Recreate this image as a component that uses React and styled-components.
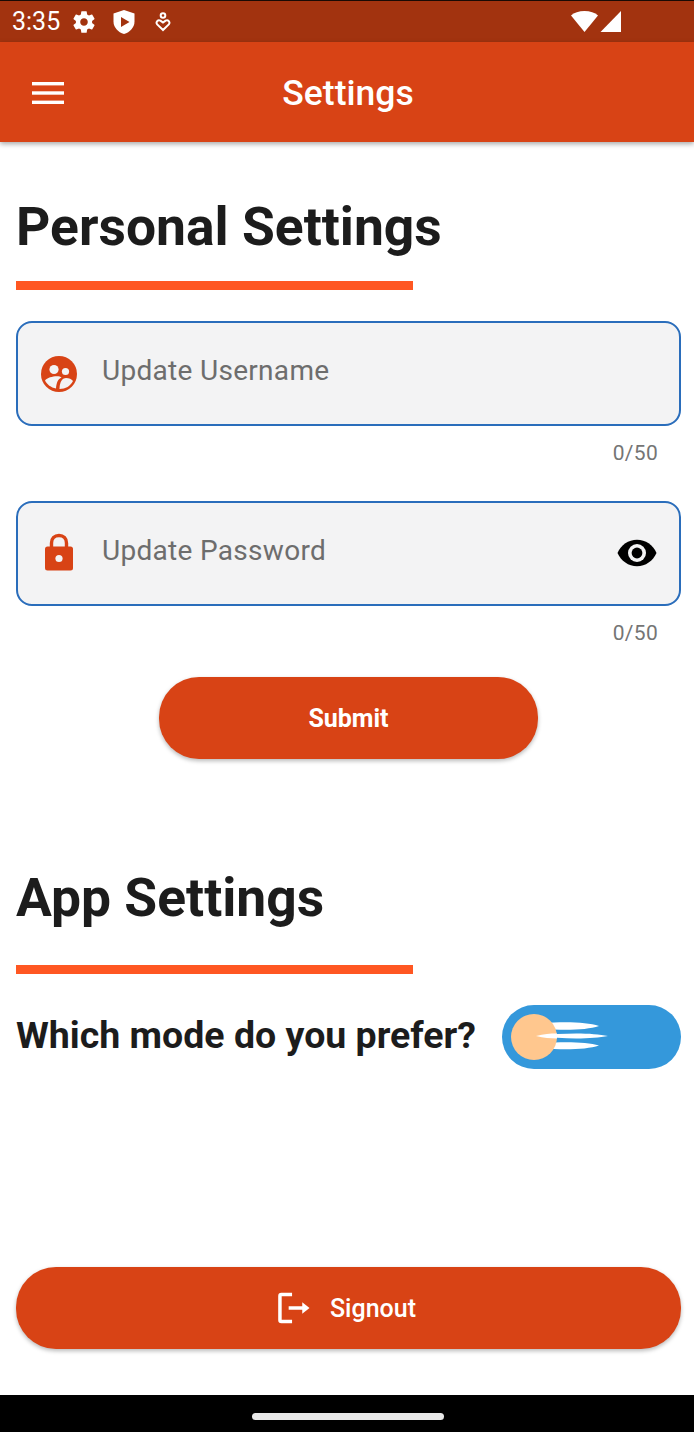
import React from "react";
import styled, { createGlobalStyle } from "styled-components";

const GlobalStyle = createGlobalStyle`
  html, body {
    margin: 0;
    padding: 0;
    background: #fff;
    font-family: Roboto, "Liberation Sans", sans-serif;
  }
`;

const Page = styled.div`
  width: 694px;
  height: 1432px;
  display: flex;
  flex-direction: column;
  overflow: hidden;
  background: #fff;
`;

const StatusBar = styled.div`
  border-top: 1px solid #1a0a04;
  background: #a2330f;
  display: flex;
  align-items: center;
  justify-content: space-between;
  padding: 1px 71px 0 12px;
  height: 40px;
  color: #fff;
  flex-shrink: 0;
`;

const StatusGroup = styled.div`
  display: flex;
  align-items: center;
`;

const Clock = styled.span`
  font-size: 25px;
  line-height: 40px;
  margin-right: 11px;
`;

const AppBar = styled.header`
  height: 100px;
  flex-shrink: 0;
  background: #d84315;
  box-shadow: 0 2px 5px rgba(0, 0, 0, 0.35);
  display: flex;
  align-items: center;
  justify-content: center;
  position: relative;
`;

const MenuIcon = styled.svg`
  position: absolute;
  left: 32px;
  top: 40px;
`;

const AppTitle = styled.h1`
  margin: 2px 0 0 2px;
  color: #fff;
  font-size: 35.5px;
  font-weight: 500;
`;

const Content = styled.main`
  flex: 1;
  display: flex;
  flex-direction: column;
  padding: 0 13px 0 16px;
`;

const SectionTitle = styled.h2`
  margin: ${(p) => p.$top}px 0 0;
  font-size: 53.4px;
  line-height: 61px;
  font-weight: 700;
  color: #1c1c1c;
`;

const Divider = styled.div`
  width: 397px;
  height: 9px;
  margin-top: ${(p) => p.$top}px;
  background: #ff5722;
`;

const Field = styled.div`
  height: 101px;
  margin-top: ${(p) => p.$top}px;
  border: 2px solid #2a6dbb;
  border-radius: 16px;
  background: #f3f3f4;
  display: flex;
  align-items: center;
  padding: 0 22px 0 22px;
`;

const FieldIcon = styled.div`
  width: 38px;
  height: 38px;
  flex-shrink: 0;
  display: flex;
  align-items: center;
  justify-content: center;
  margin-top: ${(p) => p.$lift || 0}px;
`;

const Placeholder = styled.span`
  flex: 1;
  margin: -6px 0 0 24px;
  color: #6d6d6d;
  font-size: 28px;
  letter-spacing: 0.3px;
`;

const Counter = styled.div`
  margin-top: 15px;
  padding-right: 23px;
  text-align: right;
  color: #757575;
  font-size: 21px;
  line-height: 25px;
  letter-spacing: 0.3px;
`;

const PrimaryButton = styled.button`
  display: flex;
  align-items: center;
  justify-content: center;
  gap: 20px;
  border: 0;
  padding: 0 ${(p) => (p.$wide ? 3 : 0)}px 0 0;
  background: #d84315;
  color: #fff;
  font-family: inherit;
  font-weight: ${(p) => (p.$wide ? 500 : 700)};
  font-size: 25px;
  border-radius: 40px;
  box-shadow: 0 2px 4px rgba(0, 0, 0, 0.28);
  align-self: ${(p) => (p.$wide ? "stretch" : "center")};
  width: ${(p) => (p.$wide ? "auto" : "379px")};
  height: 82px;
  margin-top: ${(p) => p.$top}px;
`;

const ModeRow = styled.div`
  display: flex;
  align-items: center;
  justify-content: space-between;
  height: 64px;
  margin-top: 31px;
`;

const ModeLabel = styled.span`
  font-size: 37.5px;
  font-weight: 700;
  color: #1c1c1c;
  margin-top: -5px;
`;

const Toggle = styled.div`
  width: 179px;
  height: 64px;
  border-radius: 32px;
  background: #3498db;
  position: relative;
`;

const ToggleArt = styled.svg`
  position: absolute;
  left: 0;
  top: 0;
`;

const NavBar = styled.div`
  height: 37px;
  flex-shrink: 0;
  background: #000;
  display: flex;
  justify-content: center;
  padding: 18px 0 0 1px;
  box-sizing: border-box;
`;

const NavHandle = styled.div`
  width: 192px;
  height: 7px;
  border-radius: 4px;
  background: #e8e8e8;
`;

const GearIcon = () => (
  <svg width="26" height="26" viewBox="0 0 24 24" fill="#fff">
    <path d="M19.43 12.98c.04-.32.07-.64.07-.98s-.03-.66-.07-.98l2.11-1.65c.19-.15.24-.42.12-.64l-2-3.46c-.12-.22-.39-.3-.61-.22l-2.49 1c-.52-.4-1.08-.73-1.69-.98l-.38-2.65A.49.49 0 0 0 14 2h-4c-.25 0-.46.18-.49.42l-.38 2.65c-.61.25-1.17.59-1.69.98l-2.49-1c-.23-.09-.49 0-.61.22l-2 3.46c-.13.22-.07.49.12.64l2.11 1.65c-.04.32-.07.65-.07.98s.03.66.07.98l-2.11 1.65c-.19.15-.24.42-.12.64l2 3.46c.12.22.39.3.61.22l2.49-1c.52.4 1.08.73 1.69.98l.38 2.65c.03.24.24.42.49.42h4c.25 0 .46-.18.49-.42l.38-2.65c.61-.25 1.17-.59 1.69-.98l2.49 1c.23.09.49 0 .61-.22l2-3.46c.12-.22.07-.49-.12-.64l-2.11-1.65zM12 15.5c-1.93 0-3.5-1.57-3.5-3.5s1.57-3.5 3.5-3.5 3.5 1.57 3.5 3.5-1.57 3.5-3.5 3.5z" />
  </svg>
);

const ShieldIcon = () => (
  <svg width="24" height="26" viewBox="0 0 24 26" style={{ marginLeft: 15 }}>
    <path d="M12 1 L22.5 4.6 V12.5 C22.5 18.5 18 23.2 12 25 C6 23.2 1.5 18.5 1.5 12.5 V4.6 Z" fill="#fff" />
    <path d="M9 8 L17.5 13 L9 18 Z" fill="#a2330f" />
  </svg>
);

const HeartIcon = () => (
  <svg width="16" height="20" viewBox="0 0 16 20" fill="none" stroke="#fff" strokeWidth="2" style={{ marginLeft: 19 }}>
    <circle cx="8" cy="3.5" r="2.3" />
    <path d="M8 18 L2.2 12.4 C0.4 10.2 3 7.2 5.4 8.6 L8 10.6 L10.6 8.6 C13 7.2 15.6 10.2 13.8 12.4 Z" />
  </svg>
);

const PeopleIcon = () => (
  <svg width="36" height="36" viewBox="0 0 36 36">
    <circle cx="18" cy="18" r="18" fill="#d84315" />
    <circle cx="13" cy="13.5" r="4.6" fill="#f3f3f4" />
    <circle cx="24.5" cy="15.5" r="3.6" fill="#f3f3f4" />
    <path d="M4 24.5 C7 20.5 18 19 20.5 21.5 C17 23 15.5 26.5 15 32.5 C10 31.5 6 28.5 4 24.5 Z" fill="#f3f3f4" />
    <path d="M18.5 33 C18.5 25 22 22 25 22 C28 22 30.5 23 32 25 C29.5 30 24.5 33 18.5 33 Z" fill="#f3f3f4" />
  </svg>
);

const LockIcon = () => (
  <svg width="30" height="38" viewBox="0 0 30 38">
    <path d="M7.5 14 V10 C7.5 5.5 10.5 2.5 15 2.5 C19.5 2.5 22.5 5.5 22.5 10 V14" fill="none" stroke="#d84315" strokeWidth="3.4" />
    <rect x="1" y="13.5" width="28" height="24" rx="2.5" fill="#d84315" />
    <circle cx="15" cy="25.5" r="3.6" fill="#f3f3f4" />
  </svg>
);

const EyeIcon = () => (
  <svg width="40" height="28" viewBox="0 0 40 28" style={{ marginTop: -2 }}>
    <path d="M0.5 14 C4 6 11.5 0.8 20 0.8 C28.5 0.8 36 6 39.5 14 C36 22 28.5 27.2 20 27.2 C11.5 27.2 4 22 0.5 14 Z" fill="#000" />
    <circle cx="20" cy="14" r="9" fill="#f3f3f4" />
    <circle cx="20" cy="14" r="5.4" fill="#000" />
  </svg>
);

const ExitIcon = () => (
  <svg width="32" height="32" viewBox="0 0 33 32" fill="none" stroke="#fff" strokeWidth="3.6">
    <path d="M14.5 2 H3.5 Q2 2 2 3.5 V28.5 Q2 30 3.5 30 H14.5" />
    <path d="M11 16 H26" />
    <path d="M25 10 L32.5 16 L25 22 Z" fill="#fff" stroke="none" />
  </svg>
);

export default function App() {
  return (
    <Page>
      <GlobalStyle />
      <StatusBar>
        <StatusGroup>
          <Clock>3:35</Clock>
          <GearIcon />
          <ShieldIcon />
          <HeartIcon />
        </StatusGroup>
        <StatusGroup>
          <svg width="52" height="24" viewBox="0 0 52 24" fill="#fff">
            <path d="M0 5.5 C3 2.5 8 1 13.5 1 C19 1 24 2.5 27 5.5 L13.5 22 Z" />
            <path d="M50 1 V22 H29.5 Z" />
          </svg>
        </StatusGroup>
      </StatusBar>
      <AppBar>
        <MenuIcon width="32" height="22" viewBox="0 0 32 22" fill="#fff">
          <rect x="0" y="0" width="32" height="3.4" />
          <rect x="0" y="9.3" width="32" height="3.4" />
          <rect x="0" y="18.6" width="32" height="3.4" />
        </MenuIcon>
        <AppTitle>Settings</AppTitle>
      </AppBar>
      <Content>
        <SectionTitle $top={54}>Personal Settings</SectionTitle>
        <Divider $top={24} />
        <Field $top={31}>
          <FieldIcon>
            <PeopleIcon />
          </FieldIcon>
          <Placeholder>Update Username</Placeholder>
        </Field>
        <Counter>0/50</Counter>
        <Field $top={35}>
          <FieldIcon $lift={-4}>
            <LockIcon />
          </FieldIcon>
          <Placeholder>Update Password</Placeholder>
          <EyeIcon />
        </Field>
        <Counter>0/50</Counter>
        <PrimaryButton $top={31}>Submit</PrimaryButton>
        <SectionTitle $top={108}>App Settings</SectionTitle>
        <Divider $top={37} />
        <ModeRow>
          <ModeLabel>Which mode do you prefer?</ModeLabel>
          <Toggle>
            <ToggleArt width="178" height="64" viewBox="0 0 178 64">
              <path d="M40 18 C65 16.5 85 17 97 21 C85 25 65 25.5 40 24 Z" fill="#fff" />
              <path d="M34 31 C65 27.5 90 28 106 31 C90 34 65 34.5 34 31 Z" fill="#fff" />
              <path d="M40 38 C65 36.5 85 37 97 40.5 C85 44.5 65 45 40 43.5 Z" fill="#fff" />
              <circle cx="32" cy="32" r="23" fill="#ffc78e" />
              <path d="M34 31 C42 29 48 28.6 55 28.6 L55 33.4 C48 33.4 42 33 34 31 Z" fill="#fff" />
            </ToggleArt>
          </Toggle>
        </ModeRow>
        <PrimaryButton $wide $top={198}>
          <ExitIcon />
          Signout
        </PrimaryButton>
      </Content>
      <NavBar>
        <NavHandle />
      </NavBar>
    </Page>
  );
}
